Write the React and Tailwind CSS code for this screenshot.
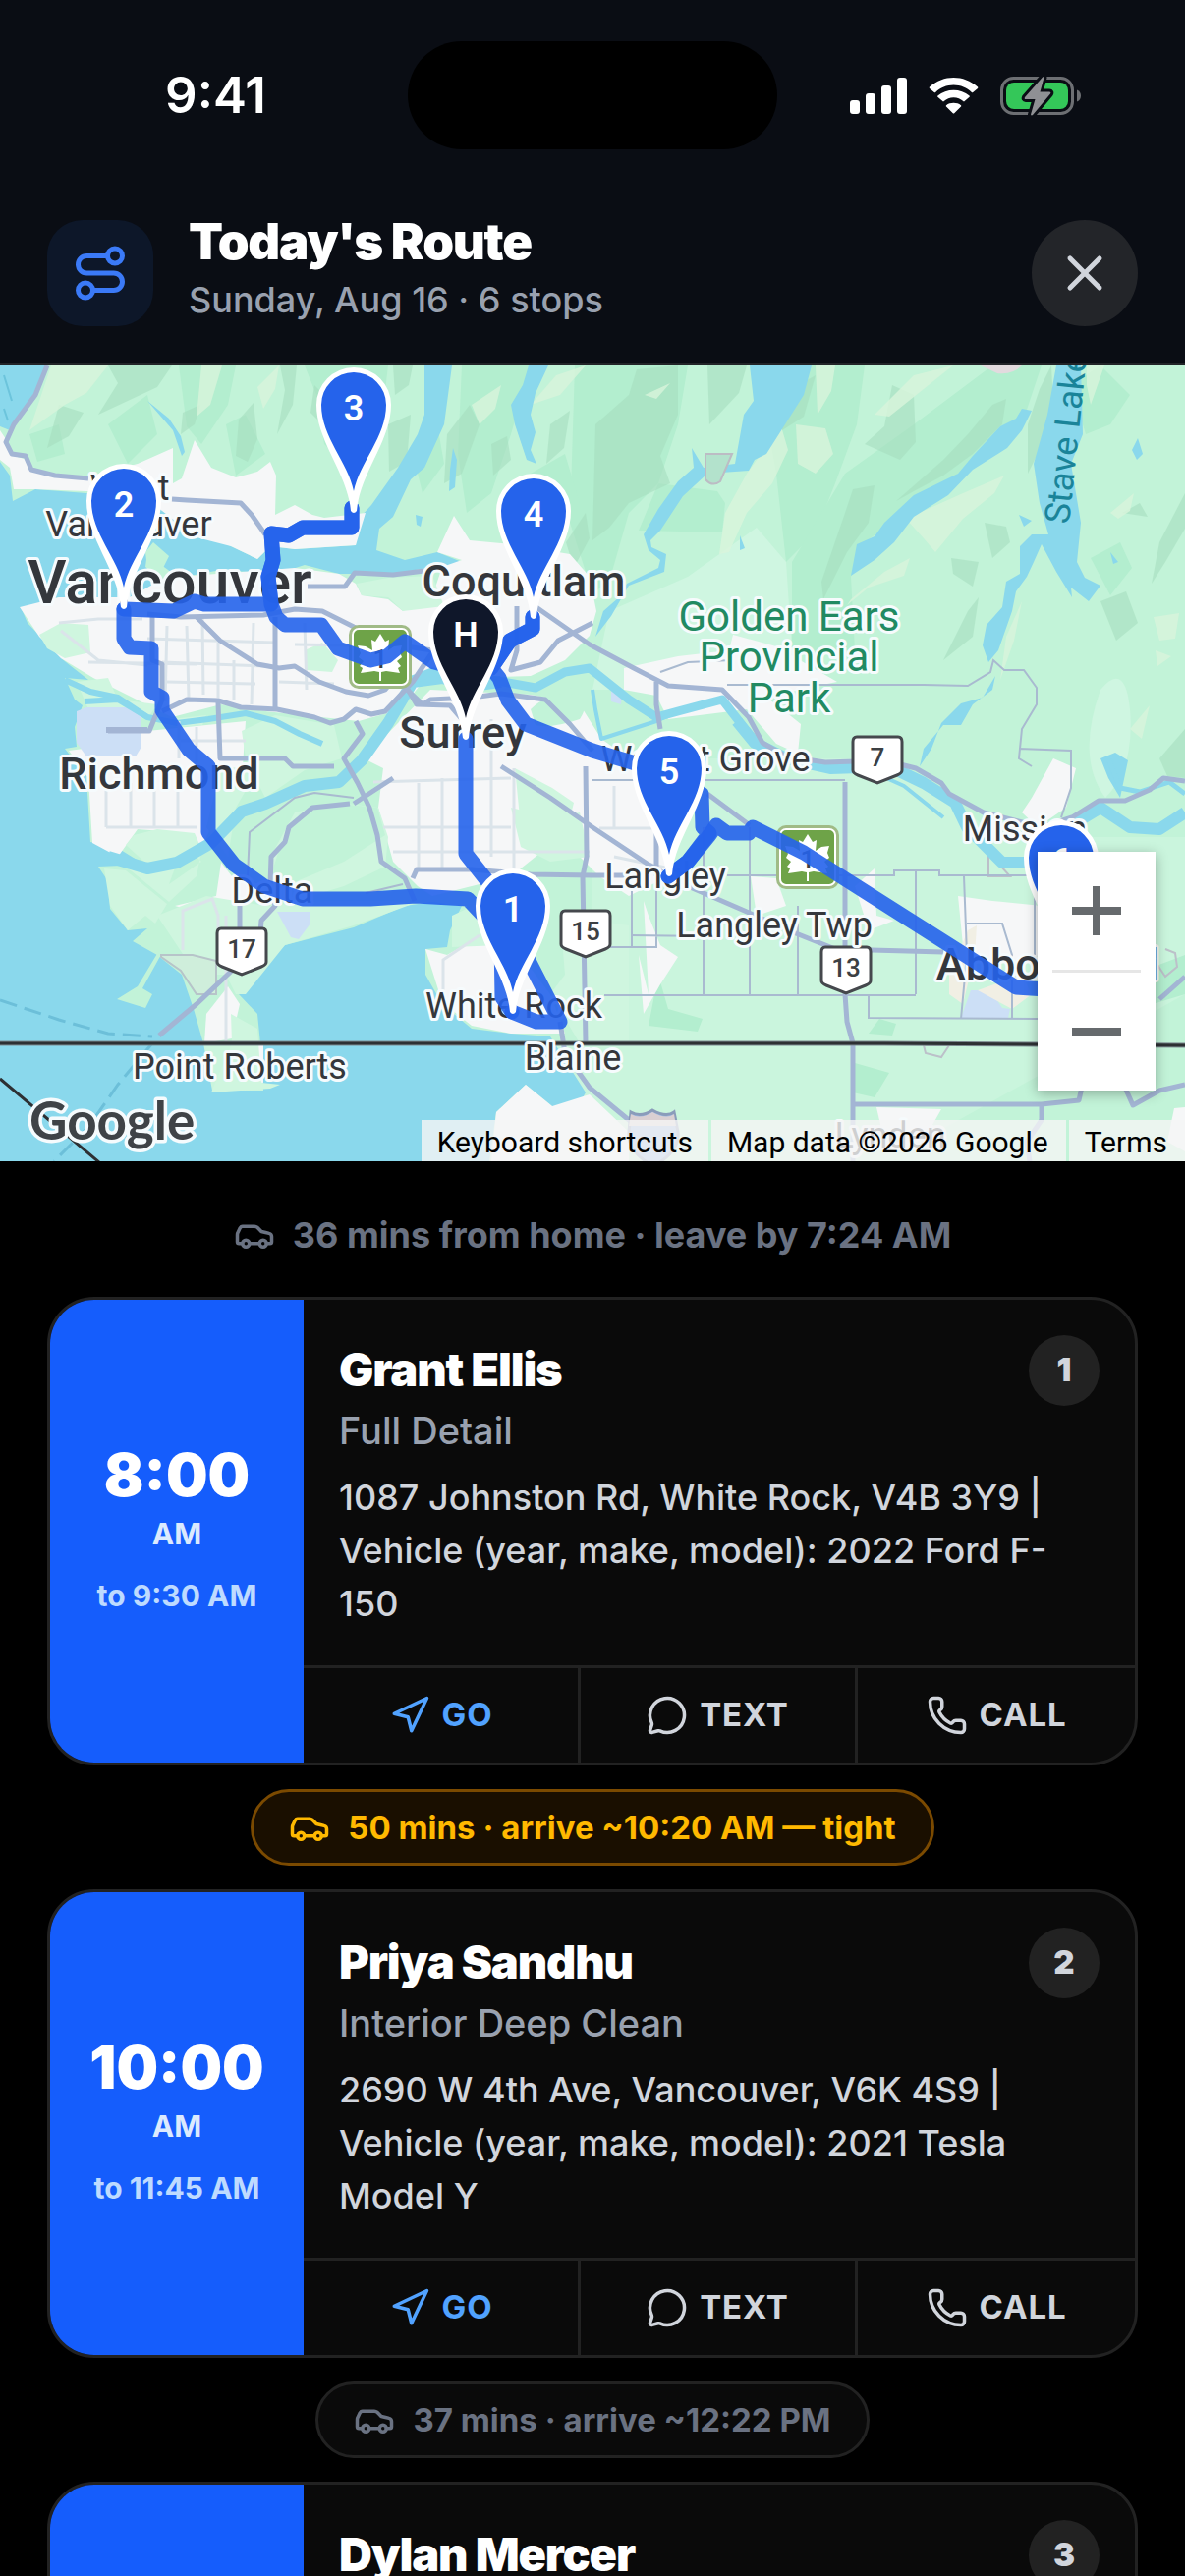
import { Car, MessageCircle, Navigation, Phone, Route, X } from "lucide-react";

const stops = [
  {
    id: 1,
    name: "Grant Ellis",
    service: "Full Detail",
    start: "8:00",
    period: "AM",
    end: "9:30 AM",
    notes: "1087 Johnston Rd, White Rock, V4B 3Y9 | Vehicle (year, make, model): 2022 Ford F-150",
    travel: "36 mins from home · leave by 7:24 AM",
    variant: "home",
  },
  {
    id: 2,
    name: "Priya Sandhu",
    service: "Interior Deep Clean",
    start: "10:00",
    period: "AM",
    end: "11:45 AM",
    notes: "2690 W 4th Ave, Vancouver, V6K 4S9 | Vehicle (year, make, model): 2021 Tesla Model Y",
    travel: "50 mins · arrive ~10:20 AM — tight",
    variant: "tight",
  },
  {
    id: 3,
    name: "Dylan Mercer",
    service: "Full Detail",
    start: "12:30",
    period: "PM",
    end: "2:00 PM",
    notes: "North Vancouver",
    travel: "37 mins · arrive ~12:22 PM",
    variant: "normal",
  },
];

const travelStyles = {
  home: "border-transparent text-4xl text-gray-500",
  tight: "border-[#7b4a00] bg-[#1a0f00] text-[33px] text-amber-400",
  normal: "border-[#222222] bg-[#0a0a0a] text-[33px] text-gray-500",
};

/* ---------- map data ---------- */

const hillsDark = [
  "M110 0L175 0L160 22L100 50L120 18Z",
  "M60 40L85 48L70 72L48 84Z",
  "M285 0L302 0L298 40L282 70L290 25Z",
  "M243 55L258 38L262 75L252 98L240 92Z",
  "M400 0L420 0L416 20L402 30Z",
  "M395 60L418 50L414 98L396 108Z",
  "M455 70L478 40L488 60L470 110L452 120Z",
  "M500 80L516 72L520 96L502 112Z",
  "M720 0L760 0L752 28L722 60Z",
  "M606 60L640 30L648 4L690 0L690 50L672 92L682 120L640 140L620 165L603 178Z",
  "M795 30L830 10L818 52L796 66Z",
  "M880 80L900 62L908 20L930 30L932 78L916 96Z",
  "M860 150L868 126L890 122L884 160L862 190L838 238L836 220Z",
  "M912 138L960 96L985 70L1010 40L1024 34L1020 60L990 90L960 112L930 128Z",
  "M1046 60L1058 24L1070 0L1072 40L1056 90L1046 110Z",
  "M1002 160L1024 164L1028 180L1010 196Z",
  "M968 196L996 200L990 225L970 212Z",
  "M1180 180L1206 130L1206 166L1186 200L1172 222Z",
  "M1120 240L1146 230L1158 262L1136 280Z",
  "M1142 150L1160 140L1168 154Z",
  "M1180 400L1206 370L1206 420L1188 418Z",
  "M960 300L985 250L996 236L990 276Z",
  "M186 48L204 40L198 60L184 70Z",
  "M320 20L334 34L328 60L316 48Z",
  "M560 60L580 46L574 84L556 100Z",
  "M576 180L596 150L600 176L584 206Z",
];

const hillsMid = [
  "M182 0L240 0L232 40L205 80L190 62Z",
  "M310 0L395 0L388 60L360 110L330 80L322 30Z",
  "M470 0L540 0L520 70L500 130L475 150L466 90Z",
  "M585 0L700 0L690 60L670 120L640 150L620 220L603 232L580 160Z",
  "M770 0L880 0L872 60L850 120L830 170L800 200L790 110Z",
  "M806 200L860 110L930 60L1010 0L1060 0L1040 60L1000 90L950 130L880 180L866 215L870 290L806 290Z",
  "M1090 20L1120 0L1150 30L1130 60L1105 70Z",
  "M1110 196L1140 180L1152 206L1130 234Z",
  "M670 120L730 128L738 140L735 170L650 168Z",
  "M420 90L445 60L452 100L430 130Z",
  "M30 70L60 60L66 90L38 98Z",
  "M110 60L150 30L160 70L130 100Z",
  "M230 60L250 50L270 90L240 112Z",
  "M540 110L575 90L590 140L560 180Z",
];

const hillsLight = [
  "M52 0L110 0L88 28L66 40L30 66Z",
  "M205 0L226 0L214 40L200 52Z",
  "M262 22L284 0L280 24L268 44Z",
  "M350 60L372 78L364 96L346 92Z",
  "M480 40L510 20L504 44L488 60Z",
  "M540 40L566 10L596 0L570 30Z",
  "M795 62L802 86L786 120L760 150L742 190L732 192L738 150L760 110Z",
  "M656 30L682 18L668 34Z",
  "M810 60L840 64L848 90L830 110L812 100Z",
  "M830 0L850 0L846 26L832 50Z",
  "M890 50L930 10L970 0L940 24L905 52Z",
  "M922 156L980 130L1022 112L1012 130L980 156L952 190L940 176Z",
  "M866 238L900 210L926 196L920 214L884 226L862 244Z",
  "M1040 240L1032 280L1018 320L1024 276Z",
  "M1106 0L1124 0L1110 40L1106 20Z",
  "M1130 150L1154 130L1150 148L1138 156Z",
  "M1174 256L1200 252L1196 278L1180 280Z",
  "M1176 290L1192 296L1178 306Z",
  "M1150 370L1170 346L1162 380Z",
];

const greens = [
  "M40 274L62 262L90 264L92 292L66 298L48 288Z",
  "M363 222L395 216L440 214L452 245L410 250L395 236L368 234Z",
  "M310 290L328 282L344 300L338 312L312 310Z",
  "M78 322L110 318L120 340L160 345L150 360L90 350Z",
  "M246 372L280 356L340 366L348 400L310 412L270 440L250 400Z",
  "M175 360L210 356L206 366L180 368Z",
  "M136 478L160 472L198 476L205 492L180 506L150 508L128 488Z",
  "M278 495L300 455L345 445L385 450L395 480L392 510L350 530L300 545L276 520Z",
  "M225 408L262 412L240 450L232 500L210 470Z",
  "M160 560L210 540L270 550L330 545L400 545L420 548L360 570L290 590L250 640L240 640L230 620L200 620Z",
  "M524 410L562 430L584 445L570 500L540 488L530 470Z",
  "M460 560L492 545L510 590L460 592Z",
  "M520 450L560 460L590 455L600 500L560 505L530 490Z",
  "M570 560L640 570L640 690L590 690L560 640L575 620Z",
  "M235 660L262 675L266 730L285 732L275 736L215 740L236 690Z",
];

const whites = [
  "M0 66L8 78L14 92L28 96L34 108L85 114L140 100L176 84L176 120L185 115L198 76L215 104L240 114L262 108L275 98L281 112L280 152L300 142L318 152L330 155L372 150L362 183L300 187L275 184L262 197L235 184L200 175L165 148L140 130L36 126L14 126L10 104L0 96Z",
  "M20 246L60 236L132 236L168 216L300 206L345 212L362 222L368 234L395 238L410 250L440 235L450 205L470 198L445 190L462 153L478 178L520 182L580 192L600 215L607 250L600 275L575 300L540 316L480 318L430 322L408 350L365 362L270 352L225 345L175 358L95 318L62 298L40 276Z",
  "M96 376L150 372L210 366L250 362L245 440L225 450L200 500L190 476L140 472L120 500L94 486L90 420L70 392L100 388Z",
  "M438 330L540 335L590 345L612 380L640 400L682 412L700 450L680 520L640 540L610 520L590 500L570 480L520 520L440 540L425 530L400 505L385 450L390 410L370 400Z",
  "M433 594L455 600L490 580L530 600L560 640L575 680L520 680L480 672L450 648Z",
  "M635 308L690 296L742 290L746 274L790 286L852 322L832 326L780 338L790 345L815 365L812 395L790 385L760 350L680 360L668 336L635 330Z",
  "M220 540L225 506L236 520L270 530L236 560L200 556L178 550Z",
  "M210 660L232 632L244 650L236 685L208 690Z",
  "M248 690L268 690L268 730L256 728Z",
  "M505 760L535 732L562 754L600 742L640 780L640 810L500 810Z",
  "M655 545L660 640L650 600L655 660L672 630L690 602L672 590L660 560Z",
  "M764 520L790 522L800 550L770 560Z",
  "M870 530L890 512L892 560L910 565L884 575Z",
  "M1050 440L1072 400L1095 410L1085 450L1056 470L1040 455Z",
  "M975 540L1010 545L1060 550L1060 600L1010 610L980 590Z",
  "M628 580L640 615L632 628L620 590Z",
  "M892 755L958 757L945 780L900 790Z",
  "M1195 756L1206 755L1206 800L1188 790Z",
];

const highways = [
  "M48 0L36 30L14 60L6 78L12 90L26 92L32 106L56 112L90 115",
  "M175 136L190 137L245 140L256 152L270 172",
  "M150 253L184 256L268 254L300 248L328 250L360 266L400 284L440 290",
  "M200 256L224 280L262 304L284 308L300 306L325 322L352 332L375 336L392 330L402 318L430 345",
  "M280 256L280 350",
  "M155 256L155 300L165 304L165 340L152 372L110 372",
  "M165 352L190 340L222 341L245 348L282 350L320 358L336 364L350 360L362 350L378 355L392 352L420 322L440 292",
  "M222 343L224 400L290 400L298 408L340 408",
  "M313 225L351 225L361 211L400 213L440 208",
  "M408 318L424 345L458 346L470 360",
  "M362 362L369 375L350 400L364 425L376 450L384 478L388 505L412 522L422 545",
  "M430 345L438 340L480 338L510 334L555 340L580 365L603 392",
  "M526 245L526 290L520 310L550 302L568 280L603 262",
  "M540 242L600 284L645 308L680 326L735 330L762 358L776 384L800 398L840 404L900 402L932 410L958 425L966 436L1001 455L1060 470L1091 460L1118 443L1145 443L1170 432L1184 420L1206 423",
  "M668 322L668 345L672 370",
  "M510 408L560 440L603 470L660 508L700 530L760 556L800 574L850 594L960 597",
  "M356 446L318 450L294 470L290 485L276 500L275 530L280 550L266 565L264 590",
  "M244 545L244 600",
  "M240 612L200 650L162 682",
  "M400 420L360 446",
  "M420 522L424 513L480 513L540 518L603 519L640 519",
  "M596 408L597 500L593 520L596 690",
  "M860 424L860 640L862 668L868 690L868 810",
  "M868 752L960 752L1060 752L1098 748L1102 730",
  "M1145 735L1153 753L1180 738L1206 732",
  "M1060 752L1060 768L1045 790L1048 810",
  "M570 668L575 700L600 735L640 768L664 790L670 810",
  "M720 436L763 468",
  "M668 408L668 520",
  "M1180 645L1206 622",
];

const streets = [
  "M60 262L100 258L145 258M62 270L100 300L150 305M90 302L200 304",
  "M170 265L168 342M190 265L192 338M206 256L207 335M222 282L222 338M238 300L238 340M258 262L256 345",
  "M150 278L280 282M165 302L270 306M170 322L260 324",
  "M310 262L312 330M300 284L420 286M284 322L340 324",
  "M108 425L108 470M133 425L133 470M157 425L157 470M181 425L181 470M108 470L200 470",
  "M182 362L182 400M200 368L200 405M184 382L250 382",
  "M426 425L426 512M450 420L450 512M500 360L500 500M523 410L523 520",
  "M390 470L520 470M400 495L600 495M380 424L520 420",
  "M451 640L451 605L488 580",
  "M625 428L625 470M625 500L720 520M610 471L680 471",
  "M230 560L230 690M186 595L186 555L216 543L222 560L222 600",
];

const ruralRoads = [
  "M603 422L860 422M643 530L643 592M716 470L716 641M763 470L763 641M812 550L812 641",
  "M740 519L910 519L910 514L956 514L956 519L1056 519M932 514L932 640M981 520L984 600L978 665",
  "M603 592L668 592L668 470M642 580L720 581M615 641L932 641M884 640L884 664L1056 665",
  "M984 568L1020 568L1030 600L1030 665M1053 470L1053 600",
  "M672 312L700 302L745 300M740 325L940 325L985 326L1008 312L1011 300L1022 310L1042 310L1055 328L1055 345L1040 370L1037 400L1050 408M1037 390L1090 392L1090 430L1080 460",
  "M252 520L254 475L300 440L320 435L360 440M372 537L410 528",
];

const navRoute = {
  homeTo1: "M474 380L474 497L500 530L530 590L570 668L546 668L521 658",
  oneTo2: "M521 658L511 643L510 583L492 560L476 543L423 540L377 543L308 543L269 530L238 508L212 475L212 408L192 391L165 351L165 338L154 332L154 288L132 287L126 278L126 248",
  twoTo3: "M126 248L177 250L198 240L208 243L276 243L273 215L278 198L276 171L294 173L308 165L358 165L358 145",
  threeTo4: "M358 145L358 165L308 165L294 173L276 171L278 198L273 215L276 243L281 256L290 264L327 264L344 288L377 300L394 296L412 281L442 302L473 310L500 308L519 280L542 268L542 256",
  fourTo5: "M542 256L542 268L519 280L500 308L508 318L517 341L535 365L603 392L650 406L714 436L715 470L722 476L700 505L680 520",
  fiveTo6: "M680 520L700 505L722 478L729 468L740 476L762 476L766 470L818 496L1034 633L1080 636",
};

const labels = [
  { text: "West", x: 132, y: 137 },
  { text: "Vancouver", x: 131, y: 174 },
  { text: "Delta", x: 277, y: 547 },
  { text: "White Rock", x: 523, y: 664 },
  { text: "Blaine", x: 583, y: 717 },
  { text: "Point Roberts", x: 244, y: 726 },
  { text: "Langley", x: 677, y: 532 },
  { text: "Langley Twp", x: 788, y: 582 },
  { text: "Walnut Grove", x: 718, y: 413 },
  { text: "Mission", x: 1043, y: 484 },
  { text: "Lynden", x: 906, y: 796 },
];

const cityLabels = [
  { text: "Coquitlam", x: 533, y: 235 },
  { text: "Surrey", x: 471, y: 389 },
  { text: "Richmond", x: 162, y: 431 },
];

const shields = [
  { text: "17", x: 246, y: 572 },
  { text: "15", x: 596, y: 554 },
  { text: "13", x: 861, y: 591 },
  { text: "7", x: 893, y: 377 },
];

const pins = [
  { label: "3", x: 360, y: 40 },
  { label: "2", x: 126, y: 138 },
  { label: "4", x: 543, y: 148 },
  { label: "H", x: 474, y: 271, home: true },
  { label: "5", x: 681, y: 410 },
  { label: "6", x: 1080, y: 501 },
  { label: "1", x: 522, y: 550 },
];

function Shield({ text, x, y }) {
  return (
    <g transform={`translate(${x} ${y})`}>
      <path
        d="M-21 1H21Q25 1 25 6V35Q25 38 20 40L0 48L-20 40Q-25 38 -25 35V6Q-25 1 -21 1Z"
        fill="#fff"
        stroke="#45484d"
        strokeWidth="3"
      />
      <text y="31" textAnchor="middle" fontSize="26" fontWeight="500" fill="#3c4043">
        {text}
      </text>
    </g>
  );
}

function MapleShield({ x, y }) {
  return (
    <g transform={`translate(${x} ${y})`}>
      <rect width="64" height="65" rx="10" fill="#a0bb86" />
      <rect x="4" y="4" width="56" height="57" rx="6" fill="#6ea348" stroke="#fff" strokeWidth="2" />
      <path
        d="M32 9L37 17L41 15L40 26L46 22L54 21L52 28L54 33L49 37L53 42L50 44L52 49L38 47L33 48L33 57L31 57L31 48L26 47L12 49L14 44L11 42L15 37L10 33L12 29L9 21L17 22L24 26L23 15L27 17Z"
        fill="#fff"
      />
      <text x="32" y="44" textAnchor="middle" fontSize="26" fontWeight="500" fill="#3c4043">
        1
      </text>
    </g>
  );
}

function Pin({ label, x, y, home }) {
  return (
    <g transform={`translate(${x} ${y})`}>
      <path d="M-3 108C-6 70 -38 37 -38 0A38 38 0 0 1 38 0C38 37 6 70 3 108Q0 112 -3 108Z" fill="#fff" />
      <path d="M0 88C-6 58 -33 33 -33 0A33 33 0 0 1 33 0C33 33 6 58 0 88Z" fill={home ? "#0f172a" : "#2563eb"} />
      <text y="16" textAnchor="middle" fontSize="36" fontWeight="600" fill="#fff">
        {label}
      </text>
    </g>
  );
}

function MapCanvas() {
  return (
    <svg
      viewBox="0 0 1206 810"
      preserveAspectRatio="xMidYMid slice"
      className="block h-full w-full font-[Roboto,sans-serif]"
      role="img"
      aria-label="Route map"
    >
      <rect width="1206" height="810" fill="#c2f3d8" />
      <path d="M700 215L770 165L800 200L806 290L720 330L603 330L620 250Z" fill="#cff6e1" />
      <path d="M603 400L900 400L1020 480L1206 480L1206 640L900 810L600 810Z" fill="#caf5dd" />
      <path d="M0 810L200 690L640 690L640 810Z" fill="#caf5dd" />
      <path d="M1120 330Q1145 300 1150 350Q1155 410 1125 440Q1095 400 1120 330Z" fill="#cff6e1" />
      <g fill="#b3eecf">
        {hillsMid.map((d) => <path key={d} d={d} />)}
        <path d="M670 620L680 655L715 665L710 678L660 672ZM895 665L912 670L908 682L884 680ZM1100 640L1206 600L1206 640L1140 660ZM870 710L905 720L890 745L868 740Z" />
      </g>
      <g fill="#a7dfc0" opacity="0.6">{hillsDark.map((d) => <path key={d} d={d} />)}</g>
      <g fill="#d9f5dc" opacity="0.8">{hillsLight.map((d) => <path key={d} d={d} />)}</g>

      {/* sea and inlets */}
      <g fill="#8ad8ec">
        <path d="M0 0H46L38 22L22 50L10 66L0 62Z" />
        <path d="M0 98L10 112L13 138L36 126L88 130L150 132L172 148L215 174L235 184L262 197L275 184L300 187L362 183L366 155L378 142L405 104L425 70L432 50L432 0L460 0L452 60L432 104L418 116L400 154L386 166L383 188L412 198L445 190L470 200L480 210L440 205L400 212L345 212L310 203L282 212L225 208L182 216L160 200L150 190L148 205L170 222L132 236L60 236L22 248L28 262L62 298L90 320L66 318L76 340L84 346L76 368L78 388L66 390L88 418L92 485L118 490L147 508L100 510L110 525L112 553L130 575L150 573L135 586L160 600L185 620L197 655L207 690L216 738L268 738L265 690L262 660L243 640L255 625L290 590L360 572L412 550L440 546L470 550L458 575L455 592L433 594L433 620L450 650L480 675L520 680L560 683L596 740L585 760L562 754L535 732L505 760L498 810L0 810Z" />
        <path d="M538 0L558 0L545 28L540 50L545 68L540 86L546 100L536 96L524 60L520 40L532 20Z" />
        <path d="M763 0L826 0L818 30L780 90L768 96L762 107L720 110L695 133L672 168L662 178L663 185L678 192L676 210L640 224L622 255L606 276L614 250L630 236L638 222L670 206L672 198L660 188L655 172L670 146L690 118L706 104L704 84L716 104L748 100L757 50L767 36Z" />
        <path d="M866 214L872 182L890 174L900 160L930 132L975 110L990 92L1018 62L1034 54L1040 44L1050 46L1040 66L1025 84L990 106L965 132L930 154L910 180L890 198Z" />
        <path d="M1075 0L1100 0L1102 70L1090 100L1100 160L1096 200L1104 216L1120 224L1108 240L1090 226L1091 236L1075 210L1060 182L1052 200L1045 215L1034 230L1030 250L1016 290L1006 302L1000 285L1004 264L1020 246L1024 220L1038 212L1038 184L1050 172L1067 172L1058 140L1052 100L1066 50Z" />
        <path d="M1013 316L1010 330L990 345L978 366L960 366L940 390L936 408L948 390L958 364L978 344L1000 338Z" />
        <path d="M150 36L172 54L184 72L188 88L185 92L176 66Z" />
        <path d="M461 84L465 96L463 124L457 128L458 106ZM423 152L430 154L428 164L424 162ZM1158 74L1163 90L1157 96L1152 86ZM1037 152L1050 158L1042 164ZM753 173L758 186L753 188ZM1130 190L1138 200L1133 202ZM1120 400L1135 394L1148 402L1140 440L1128 420Z" />
      </g>
      <path d="M4 10L12 36M4 44L8 56" stroke="#6cc4dc" strokeWidth="2" fill="none" />

      {/* populated areas and parks */}
      <g fill="#f6f7f8">{whites.map((d) => <path key={d} d={d} />)}</g>
      <g fill="#cff6df">{greens.map((d) => <path key={d} d={d} />)}</g>
      <path d="M285 490L305 456L345 446L384 450L392 478L350 505L290 530L276 518Z" fill="#c2f3d8" />
      <path d="M148 190L156 180L172 194L166 206L150 206Z" fill="#c2f3d8" />
      <path d="M106 512L128 514L170 548L158 568L148 560L130 575L112 550ZM128 510L205 494L200 520L172 546ZM172 528L205 505L200 500L180 506Z" fill="#cff6df" />
      <path d="M172 585L145 634L155 640L148 654L119 645L140 632L170 582Z" fill="#c2f3d8" />
      <path d="M78 352L88 348H136L144 356V388L138 398H88L78 384Z" fill="#ccdff6" />
      <path d="M108 371L150 371" stroke="#a3b5d4" strokeWidth="6" />
      <path d="M282 556L316 556L316 568L304 584L296 582ZM622 330L633 334L632 345L622 342Z" fill="#ccdff6" />
      <path d="M978 664L988 636L1008 636L1020 654L1028 655L1026 664Z" fill="#ccdff6" />
      <path d="M966 620L985 575L994 570L992 600L980 650L966 640ZM995 636L1030 655L1050 640L1040 620Z" fill="#f1efe4" />
      <path d="M164 600L196 600L220 606V640L200 640L184 616L164 602Z" fill="#cfeedb" stroke="#b7c4c9" strokeWidth="2" />
      <path d="M718 90H745L733 118Q725 124 718 116Z" fill="#b3e2cc" stroke="#bcbcc4" strokeWidth="2" />
      <path d="M998 0H1040Q1030 10 1015 8Z" fill="#e2dade" />
      <g fill="none" stroke="#bcc0c9" strokeWidth="2">
        <path d="M940 692H966L958 704L942 700ZM1006 490L1006 520L1028 520L1010 500M1186 594L1196 598L1198 612L1186 622L1178 610" />
      </g>

      {/* Fraser River and its arms */}
      <g fill="none" stroke="#8ad8ec" strokeLinejoin="round">
        <path d="M66 320L92 332L120 338L150 358L180 364L212 360L250 354L280 362L305 375L328 385" strokeWidth="6" />
        <path d="M86 342L120 340L150 358" strokeWidth="6" />
        <path d="M110 500L150 512L180 506L215 486L246 454L270 446L310 428L345 424L368 402L395 364L420 322L450 318L480 326L510 322" strokeWidth="12" />
        <path d="M420 320L440 312L500 320L545 328L575 312L600 308L640 340L668 358L690 352L735 340L752 362L770 386" strokeWidth="9" />
        <path d="M690 352L668 362L612 380L606 350L603 330" strokeWidth="4" />
        <path d="M750 362L768 384L800 400L845 410L905 408L940 425L972 445L984 470L1020 506L1050 506L1100 462L1120 450L1150 470L1180 472L1206 455" strokeWidth="12" />
        <path d="M840 412L880 410L920 428L960 460" strokeWidth="4" />
        <path d="M1128 400L1140 430L1160 434L1190 424L1206 436" strokeWidth="5" />
      </g>
      <path d="M540 350Q560 330 590 335Q600 345 590 360Q560 370 545 366ZM548 336L570 320L592 326Z" fill="#c2f3d8" />

      {/* roads */}
      <g fill="none" stroke="#dbe4ea" strokeWidth="3">{streets.map((d) => <path key={d} d={d} />)}</g>
      <g fill="none" stroke="#a9bad0" strokeWidth="2">{ruralRoads.map((d) => <path key={d} d={d} />)}</g>
      <g fill="none" stroke="#a3b5d4" strokeWidth="5" strokeLinejoin="round">
        {highways.map((d) => <path key={d} d={d} />)}
      </g>

      {/* border and ferry lanes */}
      <g fill="none">
        <path d="M0 646L60 666L110 680L155 683M155 690L120 732L90 775L55 810" stroke="#6cbfd9" strokeWidth="3" strokeDasharray="18 8" />
        <path d="M0 690H900L1206 692" stroke="#7d8a90" strokeWidth="5" />
        <path d="M0 690H900L1206 692M0 726L102 812" stroke="#2d3033" strokeWidth="3" />
      </g>

      {/* interstate shield */}
      <path d="M642 760Q652 766 664 758Q678 766 686 760L690 780Q692 800 665 815Q638 800 640 780Z" fill="#9db9e4" stroke="#8a9cba" strokeWidth="3" />
      <path d="M642 762Q652 768 664 760Q678 768 686 762L688 774H640Z" fill="#d9cfd2" />

      {shields.map((s) => <Shield key={s.text} {...s} />)}
      <MapleShield x={355} y={264} />
      <MapleShield x={790} y={468} />

      {/* place names */}
      <g textAnchor="middle" fill="#34373c" stroke="#f6fbfd" strokeWidth="6" strokeLinejoin="round" paintOrder="stroke">
        <g fontSize="36">
          {labels.map((l) => <text key={l.text} x={l.x} y={l.y}>{l.text}</text>)}
        </g>
        <g fontSize="45" fontWeight="500">
          {cityLabels.map((l) => <text key={l.text} x={l.x} y={l.y}>{l.text}</text>)}
        </g>
        <text x="173" y="242" fontSize="61" fontWeight="500">Vancouver</text>
        <text x="1066" y="625" fontSize="45" fontWeight="500">Abbotsford</text>
        <g fontSize="42" fill="#218a62">
          <text x="803" y="270">Golden Ears</text>
          <text x="803" y="311">Provincial</text>
          <text x="803" y="353">Park</text>
        </g>
      </g>
      <text transform="translate(1088 162) rotate(-84)" fontSize="36" fill="#1a8499">Stave Lake</text>

      {/* driving route */}
      <g fill="none" stroke="#2563eb" strokeWidth="15" strokeOpacity="0.9" strokeLinecap="round" strokeLinejoin="round">
        {Object.entries(navRoute).map(([leg, d]) => <path key={leg} d={d} />)}
      </g>

      {pins.map((p) => <Pin key={p.label} {...p} />)}

      <text
        x="30"
        y="788"
        fontSize="53"
        fontWeight="700"
        fill="#3f4347"
        stroke="#f6fbfd"
        strokeWidth="7"
        strokeLinejoin="round"
        paintOrder="stroke"
        className="font-[Lato,sans-serif]"
      >
        Google
      </text>
    </svg>
  );
}

function RouteMap() {
  return (
    <section className="relative h-[810px] shrink-0 overflow-hidden">
      <MapCanvas />
      <div className="absolute right-[30px] bottom-[72px] flex w-[120px] flex-col items-center bg-white shadow-[0_3px_12px_rgba(0,0,0,0.3)]">
        <button type="button" aria-label="Zoom in" className="flex h-[120px] w-full items-center justify-center">
          <svg viewBox="0 0 50 50" className="h-[50px] w-[50px]" stroke="#666a6d" strokeWidth="8">
            <path d="M0 25H50M25 0V50" />
          </svg>
        </button>
        <div className="h-[3px] w-[90px] bg-[#e6e6e6]" />
        <button type="button" aria-label="Zoom out" className="flex h-[120px] w-full items-center justify-center">
          <svg viewBox="0 0 50 50" className="h-[50px] w-[50px]" stroke="#666a6d" strokeWidth="8">
            <path d="M0 25H50" />
          </svg>
        </button>
      </div>
      <div className="absolute right-0 bottom-0 flex h-[42px] gap-[3px] font-[Roboto,sans-serif] text-3xl leading-[45px] text-black">
        <button type="button" className="bg-[#f5f5f5]/80 px-4">Keyboard shortcuts</button>
        <span className="bg-[#f5f5f5]/80 pr-[18px] pl-4">Map data ©2026 Google</span>
        <a href="#terms" className="bg-[#f5f5f5]/80 pr-[18px] pl-4">Terms</a>
      </div>
    </section>
  );
}

function StatusBar() {
  return (
    <div className="grid grid-cols-[1fr_376px_1fr] items-center pt-[42px]">
      <div className="pl-6 text-center text-[51px] font-semibold text-white">9:41</div>
      <div className="h-[110px] rounded-full bg-black" />
      <div className="flex items-center justify-center gap-[22px] pr-8">
        <svg viewBox="0 0 58 37" className="h-[37px] w-[58px]" fill="#fff">
          <rect x="0" y="23" width="10" height="14" rx="3" />
          <rect x="16" y="16" width="10" height="21" rx="3" />
          <rect x="32" y="8" width="10" height="29" rx="3" />
          <rect x="48" y="0" width="10" height="37" rx="3" />
        </svg>
        <svg viewBox="0 0 51 37" className="h-[37px] w-[51px]" fill="#fff">
          <path d="M25.500 7.600C32.500 7.600 39 10.300 43.900 15.100C44.300 15.400 44.900 15.400 45.200 15.100L50 10.900C50.400 10.500 50.400 10 50 9.600C36 -3.200 15 -3.200 1 9.600C0.600 10 0.600 10.500 1 10.900L5.800 15.100C6.100 15.400 6.700 15.400 7.100 15.100C12 10.300 18.500 7.600 25.500 7.600Z" />
          <path d="M25.500 20.300C29.400 20.300 32.600 21.600 35.300 24.100C35.700 24.500 36.300 24.500 36.600 24.100L41.600 19.800C42 19.400 42 18.900 41.600 18.500C32.500 10.700 18.500 10.700 9.400 18.500C9 18.900 9 19.400 9.400 19.800L14.400 24.100C14.700 24.500 15.300 24.500 15.700 24.100C18.400 21.600 21.600 20.300 25.500 20.300Z" />
          <path d="M33 28.200C33.400 28.600 33.400 29.100 33 29.500L26.200 36.300C25.800 36.700 25.200 36.700 24.800 36.300L18 29.500C17.600 29.100 17.600 28.600 18 28.200C22 25 29 25 33 28.200Z" />
        </svg>
        <svg viewBox="0 0 82 41" className="h-[41px] w-[82px]">
          <rect x="1.500" y="2.500" width="72" height="36" rx="12" fill="none" stroke="#6d6f73" strokeWidth="3" />
          <path d="M78 14.500C81 15.700 82 18 82 20.500C82 23 81 25.300 78 26.500Z" fill="#6d6f73" />
          <rect x="6" y="7" width="63" height="27" rx="8" fill="#34c759" />
          <path
            d="M43.500 1L25 22Q24 24 26 24H35.500L31 39.500Q31.500 41 33 40L51 18.500Q52 16.500 50 16.500H40.500L44.500 2Z"
            fill="#8f9094"
            stroke="#0a0d14"
            strokeWidth="6"
            paintOrder="stroke"
            strokeLinejoin="round"
          />
        </svg>
      </div>
    </div>
  );
}

function Header() {
  return (
    <header className="shrink-0 border-b-[3px] border-[#222428] bg-[#0a0d14]">
      <StatusBar />
      <div className="flex items-center gap-9 px-12 pt-[70px] pb-9">
        <div className="flex h-[108px] w-[108px] items-center justify-center rounded-[36px] bg-[#0d1729]">
          <Route size={60} className="text-[#3b7af7]" />
        </div>
        <div className="flex-1">
          <h1 className="text-[51px] leading-[48px] font-black tracking-tight text-white">Today's Route</h1>
          <p className="mt-2 text-4xl leading-[55px] font-medium text-gray-400">Sunday, Aug 16 · 6 stops</p>
        </div>
        <button type="button" aria-label="Close" className="flex h-[108px] w-[108px] items-center justify-center rounded-full bg-[#232529]">
          <X size={60} className="text-gray-300" />
        </button>
      </div>
    </header>
  );
}

function TravelLeg({ variant, children }) {
  return (
    <div
      className={`flex items-center gap-[18px] self-center rounded-full border-[3px] px-9 py-3 leading-[48px] font-bold ${travelStyles[variant]}`}
    >
      <Car size={42} />
      <span>{children}</span>
    </div>
  );
}

function StopCard({ stop }) {
  const action = "flex h-24 items-center justify-center gap-3 text-[33px] font-bold tracking-wide";

  return (
    <article className="flex shrink-0 overflow-hidden rounded-[48px] border-[3px] border-[#222222] bg-[#0a0a0a]">
      <div className="flex w-[258px] shrink-0 flex-col items-center justify-center bg-blue-600">
        <span className="text-6xl leading-[60px] font-black text-white">{stop.start}</span>
        <span className="mt-2 text-3xl leading-[45px] font-bold text-blue-100">{stop.period}</span>
        <span className="mt-[18px] text-3xl leading-[45px] font-bold text-blue-200">to {stop.end}</span>
      </div>
      <div className="flex min-w-0 flex-1 flex-col">
        <div className="flex-1 px-9 py-9">
          <div className="flex items-start justify-between gap-6">
            <div className="min-w-0">
              <h2 className="text-[47px] leading-[70px] font-black tracking-tight text-white">{stop.name}</h2>
              <p className="text-[38px] leading-[54px] font-medium text-gray-400">{stop.service}</p>
            </div>
            <span className="flex h-[72px] w-[72px] shrink-0 items-center justify-center rounded-full bg-[#222222] text-[33px] font-black text-gray-300">
              {stop.id}
            </span>
          </div>
          <p className="mt-[14px] text-4xl leading-[54px] font-medium text-gray-300">{stop.notes}</p>
        </div>
        <div className="grid grid-cols-3 divide-x-[3px] divide-[#222222] border-t-[3px] border-[#222222]">
          <button type="button" className={`${action} text-blue-400`}>
            <Navigation size={42} />
            GO
          </button>
          <button type="button" className={`${action} text-gray-300`}>
            <MessageCircle size={42} />
            TEXT
          </button>
          <button type="button" className={`${action} text-gray-300`}>
            <Phone size={42} />
            CALL
          </button>
        </div>
      </div>
    </article>
  );
}

export default function App() {
  return (
    <div className="flex h-screen flex-col overflow-hidden bg-black font-[Inter,sans-serif]">
      <Header />
      <RouteMap />
      <main className="flex min-h-0 flex-1 flex-col gap-6 overflow-y-auto px-12 pt-9 [scrollbar-width:none]">
        {stops.map((stop) => [
          <TravelLeg key={`leg-${stop.id}`} variant={stop.variant}>{stop.travel}</TravelLeg>,
          <StopCard key={stop.id} stop={stop} />,
        ])}
      </main>
    </div>
  );
}
